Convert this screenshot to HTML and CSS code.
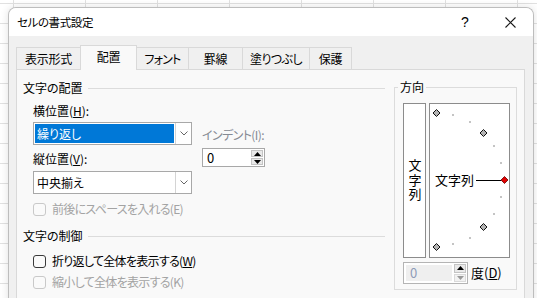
FILE: index.html
```
<!DOCTYPE html>
<html lang="ja">
<head>
    <meta charset="UTF-8">
    <meta name="viewport" content="width=device-width, initial-scale=1.0">
    <title>セルの書式設定</title>
    <link rel="stylesheet" href="styles.css">
</head>
<body>
    <div class="dialog">
        <div class="titlebar">
            <span class="title">セルの書式設定</span>
            <span class="help">?</span>
            <span class="close">
                <svg width="11" height="11" viewBox="0 0 11 11"><path d="M0.5 0.5 L10.5 10.5 M10.5 0.5 L0.5 10.5" stroke="#1a1a1a" stroke-width="1.1" fill="none"/></svg>
            </span>
        </div>
        <div class="dialog-body">
            <div class="tabs">
                <div class="tab t1">表示形式</div>
                <div class="tab t2 active">配置</div>
                <div class="tab t3">フォント</div>
                <div class="tab t4">罫線</div>
                <div class="tab t5">塗りつぶし</div>
                <div class="tab t6">保護</div>
            </div>
            <div class="panel">
                <div class="left">
                    <div class="group-title">文字の配置</div>
                    <div class="align-row">
                        <div class="align-col">
                            <div class="label">横位置(<u>H</u>):</div>
                            <div class="combo selected">
                                <span class="combo-text">繰り返し</span>
                                <span class="combo-btn"><svg width="8" height="5" viewBox="0 0 8 5"><path d="M0.5 0.5 L4 4 L7.5 0.5" stroke="#666" fill="none"/></svg></span>
                            </div>
                            <div class="label second">縦位置(<u>V</u>):</div>
                            <div class="combo second">
                                <span class="combo-text">中央揃え</span>
                                <span class="combo-btn"><svg width="8" height="5" viewBox="0 0 8 5"><path d="M0.5 0.5 L4 4 L7.5 0.5" stroke="#666" fill="none"/></svg></span>
                            </div>
                        </div>
                        <div class="indent-col">
                            <div class="label muted">インデント(I):</div>
                            <div class="spin">
                                <span class="spin-value">0</span>
                                <span class="spin-btns">
                                    <span class="spin-btn"><svg width="7" height="4" viewBox="0 0 7 4"><path d="M0 4 L3.5 0 L7 4 Z" fill="#000"/></svg></span>
                                    <span class="spin-btn"><svg width="7" height="4" viewBox="0 0 7 4"><path d="M0 0 L3.5 4 L7 0 Z" fill="#000"/></svg></span>
                                </span>
                            </div>
                        </div>
                    </div>
                    <div class="check disabled first"><span class="box"></span><span class="check-text">前後にスペースを入れる(E)</span></div>
                    <div class="group-title second">文字の制御</div>
                    <div class="check wrap"><span class="box"></span><span class="check-text">折り返して全体を表示する(<u>W</u>)</span></div>
                    <div class="check disabled shrink"><span class="box"></span><span class="check-text">縮小して全体を表示する(K)</span></div>
                </div>
                <fieldset class="orient">
                    <legend>方向</legend>
                    <div class="orient-boxes">
                        <div class="vert-box"><span class="vert-text">文字列</span></div>
                        <div class="dial-box">
                            <svg width="79" height="153" viewBox="0 0 79 153">
                                <g fill="#c4c4c4">
                                    <rect x="22" y="10" width="2" height="2"/>
                                    <rect x="39" y="17" width="2" height="2"/>
                                    <rect x="63" y="41" width="2" height="2"/>
                                    <rect x="70" y="58" width="2" height="2"/>
                                    <rect x="70" y="92" width="2" height="2"/>
                                    <rect x="63" y="109" width="2" height="2"/>
                                    <rect x="39" y="133" width="2" height="2"/>
                                    <rect x="22" y="139" width="2" height="2"/>
                                </g>
                                <g fill="#b4b4b4" stroke="#111" stroke-width="1">
                                    <path d="M6.5 5.5 L10 9 L6.5 12.5 L3 9 Z"/>
                                    <path d="M53.5 25.5 L57 29 L53.5 32.5 L50 29 Z"/>
                                    <path d="M53.5 119.5 L57 123 L53.5 126.5 L50 123 Z"/>
                                    <path d="M6.5 139.5 L10 143 L6.5 146.5 L3 143 Z"/>
                                </g>
                                <path d="M74.5 72.5 L78 76 L74.5 79.5 L71 76 Z" fill="#e00000" stroke="#600" stroke-width="0.8"/>
                                <line x1="46" y1="76.5" x2="71" y2="76.5" stroke="#000" stroke-width="1"/>
                                <text x="5" y="81" class="dial-text">文字列</text>
                            </svg>
                        </div>
                    </div>
                    <div class="deg-row">
                        <div class="deg-spin">
                            <span class="deg-value">0</span>
                            <span class="spin-btns">
                                <span class="spin-btn"><svg width="7" height="4" viewBox="0 0 7 4"><path d="M0 4 L3.5 0 L7 4 Z" fill="#000"/></svg></span>
                                <span class="spin-btn off"><svg width="7" height="4" viewBox="0 0 7 4"><path d="M0 0 L3.5 4 L7 0 Z" fill="#9a9a9a"/></svg></span>
                            </span>
                        </div>
                        <span class="deg-label">度(<u>D</u>)</span>
                    </div>
                </fieldset>
            </div>
        </div>
    </div>
</body>
</html>
```

FILE: styles.css
```
body {
    margin: 0;
    height: 298px;
    overflow: hidden;
    background-color: #fff;
    background-image: linear-gradient(90deg, #e1e1e1 1px, transparent 1px),
                      linear-gradient(#e1e1e1 1px, transparent 1px);
    background-size: 72px 20px;
    background-position: 13px 3px;
    font-family: "Noto Sans CJK JP", sans-serif;
    font-size: 12px;
    font-feature-settings: "palt" 1;
    color: #000;
}
.dialog {
    margin: 7px 0 0 8px;
    width: 526px;
    height: 300px;
    box-sizing: border-box;
    border: 1px solid #bdbdbd;
    border-bottom: none;
    border-radius: 8px 8px 0 0;
    background: #f0f0f0;
    overflow: hidden;
    box-shadow: 0 0 8px rgba(0, 0, 0, 0.12);
}
.titlebar {
    height: 28px;
    background: #fff;
    display: flex;
    align-items: center;
    padding-left: 8px;
}
.title {
    flex: 1;
    line-height: 14px;
    font-size: 11.5px;
    letter-spacing: -0.4px;
}
.help {
    width: 44px;
    text-align: center;
    font-family: "Liberation Sans", sans-serif;
    font-size: 14px;
}
.close {
    width: 46px;
    display: flex;
    justify-content: center;
}
.dialog-body {
    padding: 9px 8px 0 7px;
}
.tabs {
    display: flex;
    align-items: flex-end;
    height: 24px;
}
.tab {
    height: 22px;
    box-sizing: border-box;
    border: 1px solid #d9d9d9;
    border-bottom: none;
    margin-left: -1px;
    display: flex;
    align-items: center;
    justify-content: center;
    line-height: 14px;
    letter-spacing: -0.3px;
}
.tab.t1 { margin-left: 0; width: 65px; }
.tab.t2 { width: 57px; }
.tab.t3 { width: 53px; letter-spacing: -0.8px; }
.tab.t4 { width: 55px; }
.tab.t5 { width: 68px; letter-spacing: -0.6px; }
.tab.t6 { width: 43px; }
.tab.active {
    height: 25px;
    margin-bottom: -1px;
    background: #f9f9f9;
    position: relative;
    z-index: 1;
    padding-bottom: 2px;
}
.panel {
    border: 1px solid #d9d9d9;
    background: #f9f9f9;
    height: 300px;
    display: flex;
    gap: 9px;
    padding: 11px 6px 0 6px;
}
.left {
    width: 362px;
}
.group-title {
    display: flex;
    align-items: center;
    line-height: 14px;
}
.group-title::after {
    content: "";
    flex: 1;
    height: 1px;
    background: #dcdcdc;
    margin-left: 5px;
}
.group-title.second {
    margin-top: 12px;
}
.align-row {
    display: flex;
    margin: 9px 0 0 10px;
}
.label {
    line-height: 14px;
}
.label.second {
    margin-top: 7px;
}
.muted {
    color: #858a93;
    letter-spacing: -0.6px;
}
.combo {
    display: flex;
    width: 159px;
    height: 23px;
    box-sizing: border-box;
    border: 1px solid #a8a8a8;
    background: #fff;
    margin-top: 4px;
}
.combo.second {
    margin-top: 5px;
}
.combo-text {
    flex: 1;
    margin: 1px;
    padding-left: 2px;
    line-height: 19px;
}
.combo.selected .combo-text {
    background: #0078d7;
    color: #fff;
}
.combo-btn {
    width: 15px;
    border-left: 1px solid #d4d4d4;
    display: flex;
    align-items: center;
    justify-content: center;
}
.indent-col {
    margin-left: 10px;
    padding-top: 24px;
}
.spin {
    display: flex;
    width: 63px;
    height: 19px;
    box-sizing: border-box;
    border: 1px solid #a8a8a8;
    background: #fff;
    margin-top: 6px;
}
.spin-value {
    flex: 1;
    padding-left: 4px;
    line-height: 17px;
    font-size: 13px;
}
.spin-btns {
    width: 14px;
    display: flex;
    flex-direction: column;
    gap: 1px;
    padding: 1px;
    box-sizing: border-box;
}
.spin-btn {
    flex: 1;
    background: #e9e9e9;
    border: 1px solid #c4c4c4;
    display: flex;
    align-items: center;
    justify-content: center;
}
.spin-btn.off {
    background: #f2f2f2;
    border-color: #dadada;
}
.check {
    display: flex;
    align-items: center;
    gap: 6px;
    line-height: 16px;
    margin-left: 10px;
}
.check-text {
    letter-spacing: -0.7px;
}
.check.first { margin-top: 7px; }
.check.wrap { margin-top: 10px; }
.check.shrink { margin-top: 5px; }
.box {
    width: 13px;
    height: 13px;
    box-sizing: border-box;
    border: 1px solid #3a3a3a;
    border-radius: 3px;
    background: #fafafa;
}
.check.disabled {
    color: #a3a3a3;
}
.check.disabled .box {
    border-color: #c9c9c9;
}
.orient {
    width: 123px;
    box-sizing: border-box;
    margin: -1px 0 0 0;
    padding: 9px 6px 5px 8px;
    border: 1px solid #dcdcdc;
    min-inline-size: 0;
    align-self: flex-start;
}
.orient legend {
    padding: 0 2px;
    margin-left: -5px;
    line-height: 14px;
}
.orient-boxes {
    display: flex;
    gap: 3px;
}
.vert-box {
    width: 24px;
    height: 155px;
    box-sizing: border-box;
    border: 1px solid #8c8c8c;
    background: #fff;
    display: flex;
    align-items: center;
    justify-content: center;
}
.vert-text {
    writing-mode: vertical-rl;
    font-size: 13px;
    letter-spacing: 1.5px;
    line-height: 14px;
}
.dial-box {
    width: 81px;
    height: 155px;
    box-sizing: border-box;
    border: 1px solid #8c8c8c;
    background: #fff;
}
.dial-box svg {
    display: block;
}
.dial-text {
    font-family: "Noto Sans CJK JP", sans-serif;
    font-size: 13px;
}
.deg-row {
    display: flex;
    align-items: center;
    gap: 3px;
    margin-top: 4px;
}
.deg-spin {
    display: flex;
    width: 65px;
    height: 22px;
    box-sizing: border-box;
    border: 1px solid #b4b4b4;
    background: #fff;
}
.deg-value {
    flex: 1;
    margin: 2px 1px 2px 2px;
    background: #efefef;
    color: #8d9cb8;
    padding-left: 4px;
    line-height: 16px;
    font-size: 13px;
}
.deg-label {
    line-height: 14px;
    font-size: 13px;
}
```
